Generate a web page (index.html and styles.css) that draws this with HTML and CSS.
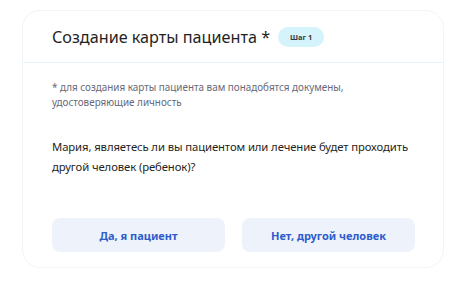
FILE: index.html
```html
<!DOCTYPE html>
<html lang="ru">
<head>
  <meta charset="UTF-8">
  <meta name="viewport" content="width=device-width, initial-scale=1.0">
  <title>Создание карты пациента</title>
  <link rel="stylesheet" href="styles.css">
</head>
<body>
  <!-- карточка шага 1 -->
  <div class="card">
    <div class="card-header">
      <h1 class="card-title">Создание карты пациента *</h1>
      <span class="step-badge">Шаг 1</span>
    </div>
    <div class="card-body">
      <p class="note">* для создания карты пациента вам понадобятся докумены, удостоверяющие личность</p>
      <p class="question">Мария, являетесь ли вы пациентом или лечение будет проходить другой человек (ребенок)?</p>
      <div class="answer-buttons">
        <button class="answer-btn">Да, я пациент</button>
        <button class="answer-btn">Нет, другой человек</button>
      </div>
    </div>
  </div>
</body>
</html>
```

FILE: styles.css
```css
body {
  margin: 0;
  background: #fff;
  font-family: "Noto Sans", "Open Sans", Arial, sans-serif;
  color: #1f1f24;
}
/* карточка */
.card {
  width: 420px;
  height: 256px;
  margin: 10px 0 0 22px;
  border: 1px solid #f4f4f6;
  border-radius: 18px;
  background: #fff;
}
.card-header {
  display: flex;
  align-items: center;
  gap: 8px;
  height: 51px;
  padding: 0 29px;
  border-bottom: 1px solid #e6f5fc;
}
.card-title {
  margin: 0;
  font-size: 16.2px;
  font-weight: 400;
}
.step-badge {
  padding: 5px 12px;
  font-size: 7.5px;
  font-weight: 700;
  color: #3a3a44;
  background: #d4f3fb;
  border-radius: 11px;
}
.card-body {
  padding: 17px 28px 0 29px;
}
.note {
  max-width: 300px;
  margin: 0;
  font-size: 9.9px;
  line-height: 15px;
  color: #686878;
}
.question {
  margin: 27px 0 0;
  font-size: 11.3px;
  line-height: 20px;
  letter-spacing: -0.1px;
  color: #1f1f24;
}
/* кнопки ответа */
.answer-buttons {
  display: grid;
  grid-template-columns: 1fr 1fr;
  gap: 17px;
  margin-top: 41px;
}
.answer-btn {
  height: 34px;
  border: none;
  border-radius: 8px;
  background: #eef3fb;
  color: #2d5ccc;
  font-family: inherit;
  font-size: 11px;
  font-weight: 700;
  cursor: pointer;
}
```
